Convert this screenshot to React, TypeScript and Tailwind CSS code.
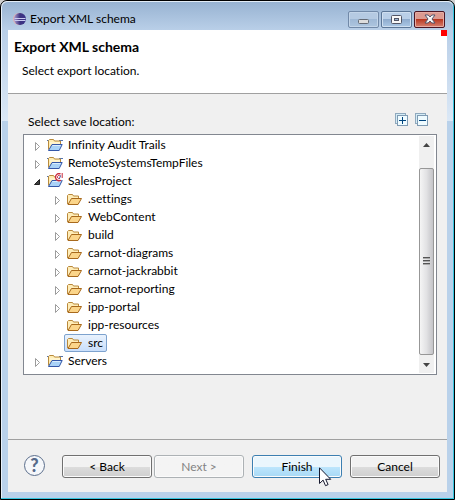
import React from "react";

type Kind = "project" | "web" | "folder";
interface Item {
  name: string;
  kind: Kind;
  state: "open" | "closed" | "none";
  selected?: boolean;
  children?: Item[];
}

const items: Item[] = [
  { name: "Infinity Audit Trails", kind: "project", state: "closed" },
  { name: "RemoteSystemsTempFiles", kind: "project", state: "closed" },
  {
    name: "SalesProject",
    kind: "web",
    state: "open",
    children: [
      { name: ".settings", kind: "folder", state: "closed" },
      { name: "WebContent", kind: "folder", state: "closed" },
      { name: "build", kind: "folder", state: "closed" },
      { name: "carnot-diagrams", kind: "folder", state: "closed" },
      { name: "carnot-jackrabbit", kind: "folder", state: "closed" },
      { name: "carnot-reporting", kind: "folder", state: "closed" },
      { name: "ipp-portal", kind: "folder", state: "closed" },
      { name: "ipp-resources", kind: "folder", state: "none" },
      { name: "src", kind: "folder", state: "none", selected: true },
    ],
  },
  { name: "Servers", kind: "project", state: "closed" },
];

function FolderIcon({ kind }: { kind: Kind }) {
  const project = kind !== "folder";
  return (
    <svg viewBox="0 0 16 16" className="h-4 w-4 shrink-0" aria-hidden="true">
      {project ? (
        <>
          <path d="M0 3.5h3M12 3.5h4" stroke="#5574ad" />
          <path d="M1.5 12.5V3.5l1-1h4l1 1.500h6V8" fill="#ffedb3" stroke="#b88a3c" />
          <path d="M3 6h10" stroke="#fffbe9" />
          <path d="M1.5 13.5 5 7.5H15.2L12.2 13.5Z" fill="#a9d2f7" stroke="#3457a8" />
          <path d="M5.500 8.500H13.500" stroke="#d9edff" />
        </>
      ) : (
        <>
          <path d="M.5 12.500V4.500l1-1h4l1 1.500h5V8" fill="#ffedb8" stroke="#b9883b" />
          <path d="M1 13.500 4.500 7.500H14.500L11 13.500Z" fill="#fbd58a" stroke="#a8691c" />
          <path d="M.5 5v8" stroke="#b9883b" />
        </>
      )}
      {kind === "web" && (
        <>
          <circle cx="12" cy="4" r="4" fill="#fff" />
          <path d="M13.500 .8A3.600 3.600 0 1 0 14 7.200" fill="none" stroke="#c92a3c" strokeWidth="1.300" />
          <path d="M13.500 3A1.700 1.700 0 1 0 13 5.500M15.200 0v5" fill="none" stroke="#c92a3c" />
          <path d="M12.500 5.500l1-3" stroke="#345aa5" />
        </>
      )}
    </svg>
  );
}

function Expander({ item }: { item: Item }) {
  if (item.state === "none") return <span className="w-3 shrink-0" />;
  return (
    <button
      type="button"
      aria-label={(item.state === "open" ? "Collapse " : "Expand ") + item.name}
      className="h-4 w-3 shrink-0"
    >
      <svg viewBox="0 0 12 16" className="h-4 w-3">
        {item.state === "open" ? (
          <path d="M7.500 6.500v5h-5Z" fill="#404040" stroke="#222" />
        ) : (
          <path d="M3.500 5.500v8l4-4Z" fill="#fff" stroke="#9c9c9c" />
        )}
      </svg>
    </button>
  );
}

function TreeRow({ item }: { item: Item }) {
  return (
    <li role="treeitem" aria-selected={!!item.selected} aria-expanded={item.state === "none" ? undefined : item.state === "open"}>
      <div className="flex h-[18px] items-center">
        <Expander item={item} />
        <span
          className={
            "flex h-[18px] items-center gap-[5px] rounded-[2px] border pr-[3px] pl-[2px] " +
            (item.selected
              ? "border-[#7da2ce] bg-gradient-to-b from-[#e9f2fd] to-[#c9dffb]"
              : "border-transparent")
          }
        >
          <FolderIcon kind={item.kind} />
          <span className="leading-4 whitespace-nowrap">{item.name}</span>
        </span>
      </div>
      {item.children && (
        <ul role="group" className="pl-5">
          {item.children.map((c) => (
            <TreeRow key={c.name} item={c} />
          ))}
        </ul>
      )}
    </li>
  );
}

function TreeTool({ label, plus }: { label: string; plus?: boolean }) {
  return (
    <button type="button" aria-label={label}>
      <svg viewBox="0 0 13 13" className="h-[13px] w-[13px]" shapeRendering="crispEdges">
        <rect x="0.5" y="0.5" width="10" height="10" fill="#d5ecf6" stroke="#8fa9be" />
        <rect x="2.5" y="2.5" width="10" height="10" fill="#effbff" stroke="#7f9bb3" />
        <path d="M4 7.5h7" stroke="#00457e" />
        {plus && <path d="M7.5 4v7" stroke="#00457e" />}
      </svg>
    </button>
  );
}

function Scrollbar() {
  return (
    <div className="flex w-[15px] shrink-0 flex-col bg-[#f0f0f0]" aria-hidden="true">
      <svg viewBox="0 0 15 32" className="h-8 w-[15px]">
        <path d="M4 11 7.5 7 11 11Z" fill="#444" />
      </svg>
      <div className="flex flex-1 items-center justify-center rounded-[2px] border border-[#979797] bg-gradient-to-r from-[#f5f5f5] via-[#e2e2e4] to-[#c4c4c8]">
        <svg viewBox="0 0 7 9" className="h-[9px] w-[7px]" shapeRendering="crispEdges">
          <path d="M0 .5h7M0 3.5h7M0 6.5h7" stroke="#555" />
          <path d="M0 1.5h7M0 4.5h7M0 7.5h7" stroke="#aaa" />
        </svg>
      </div>
      <svg viewBox="0 0 15 18" className="h-[18px] w-[15px]">
        <path d="M4 8 11 8 7.5 12Z" fill="#444" />
      </svg>
    </div>
  );
}

function EclipseIcon() {
  return (
    <svg viewBox="0 0 16 16" className="h-4 w-4" aria-hidden="true">
      <defs>
        <linearGradient id="orb" x1="0" x2="1">
          <stop offset="0" stopColor="#a99bd0" />
          <stop offset="0.5" stopColor="#3c3280" />
          <stop offset="1" stopColor="#3a3288" />
        </linearGradient>
      </defs>
      <circle cx="9" cy="8" r="6" fill="#e0b0b0" />
      <circle cx="10" cy="8" r="6" fill="url(#orb)" />
      <path d="M4.500 7.500h11M4.500 9.500h11" stroke="#c9cbf0" />
    </svg>
  );
}

const caption = "flex h-[17px] w-[31px] items-center justify-center rounded-[2px] border ";

function DialogButton({ children, tone = "normal" }: { children: React.ReactNode; tone?: "normal" | "off" | "hot" }) {
  const look =
    tone === "hot"
      ? "border-[#3c7fb1] from-[#eaf6fd] from-50% to-[#a7d9f5] via-[#bee6fd] via-50%"
      : tone === "off"
        ? "border-[#adb2b5] from-[#f4f4f4] to-[#f4f4f4] text-[#838383]"
        : "border-[#707070] from-[#f2f2f2] from-50% to-[#cfcfcf] via-[#dddddd] via-50%";
  return (
    <button
      type="button"
      disabled={tone === "off"}
      className={"h-[23px] min-w-0 flex-1 rounded-[3px] border bg-gradient-to-b leading-4 shadow-[inset_0_0_0_1px_#fbfbfb] " + look}
    >
      {children}
    </button>
  );
}

export default function App() {
  return (
    <div className="min-h-screen bg-[#d0d0d0] font-['Lato','Open_Sans',sans-serif] text-[12px] text-black [font-variant-ligatures:none]">
      <div className="flex min-h-screen flex-col rounded-t-[7px] border border-black bg-[linear-gradient(#b9cfe8_30px,#dbe8f6_120px,#b9d1ea_120px)] px-[7px] pb-[7px] shadow-[inset_-1px_-1px_0_#35c5df,inset_1px_1px_0_#e8f1fa]">
        <header className="-mx-[6px] flex h-[29px] items-center rounded-t-[6px] border-t border-[#e3edf7] bg-gradient-to-b from-[#98b3d2] to-[#b9cfe8] pt-[6px] pr-2 pl-2">
          <EclipseIcon />
          <h1 className="ml-1 flex-1 leading-4">Export XML schema</h1>
          <div className="flex gap-[2px]">
            <button type="button" aria-label="Minimize" className={caption + "border-[#7189a8] bg-gradient-to-b from-[#b5cae2] from-50% to-[#adc5df] via-[#9fb9d6] via-50% shadow-[inset_0_0_0_1px_#c3d5e9]"}>
              <svg viewBox="0 0 11 5" className="mt-1 h-[5px] w-[11px]"><rect x=".5" y=".5" width="10" height="4" rx="1" fill="#ddd" stroke="#646a75" /></svg>
            </button>
            <button type="button" aria-label="Maximize" className={caption + "border-[#5b7697] bg-gradient-to-b from-[#b9cfe8] from-50% to-[#abc8e6] via-[#8facce] via-50% shadow-[inset_0_0_0_1px_#cfdff0]"}>
              <svg viewBox="0 0 11 9" className="h-[9px] w-[11px]"><rect x=".5" y=".5" width="10" height="8" rx="1" fill="#f8f8f8" stroke="#535666" /><rect x="3.5" y="3.5" width="4" height="2" fill="#9ab5d4" stroke="#535666" /></svg>
            </button>
            <button type="button" aria-label="Close" className={caption + "border-[#4b1523] bg-gradient-to-b from-[#dc9a90] from-50% to-[#d68070] via-[#b93720] via-50% shadow-[inset_0_0_0_1px_#e6aca4]"}>
              <svg viewBox="0 0 12 10" className="h-[10px] w-3">
                <path d="M1 1h3.2L6 3 7.8 1H11L8 5l3 4H7.8L6 7 4.2 9H1L4 5Z" fill="#f7f7f7" stroke="#53546a" strokeLinejoin="round" />
              </svg>
            </button>
          </div>
        </header>

        <section className="flex h-[63px] justify-between bg-white pl-[6px]">
          <div>
            <h2 className="mt-2 text-[14px] leading-[18px] font-bold">Export XML schema</h2>
            <p className="mt-[7px] ml-2 leading-4">Select export location.</p>
          </div>
          <span className="h-[6px] w-[6px] bg-[#ff0000]" />
        </section>

        <main className="flex-1 border-t border-b border-[#a0a0a0] bg-[#f0f0f0] pt-[19px] pr-[10px] pl-[15px]">
          <div className="flex h-[21px] items-start pr-[9px] pl-[5px]">
            <span id="tree-label" className="flex-1 pt-[1px] leading-4">Select save location:</span>
            <div className="flex gap-[7px]">
              <TreeTool label="Expand all" plus />
              <TreeTool label="Collapse all" />
            </div>
          </div>
          <div className="flex border border-[#828790] bg-white py-px pr-[2px] pl-2">
            <ul role="tree" aria-labelledby="tree-label" className="flex-1 pb-[3px]">
              {items.map((i) => (
                <TreeRow key={i.name} item={i} />
              ))}
            </ul>
            <Scrollbar />
          </div>
        </main>

        <footer className="flex h-[52px] items-start bg-[#f0f0f0] px-[7px] pt-[15px] pl-4">
          <button type="button" aria-label="Help" className="mr-[17px] h-[21px] w-[21px] shrink-0 rounded-full border border-[#5b6e8c] bg-[#f5f7fa] text-[18px] leading-[19px] font-black text-[#566a8b]">
            ?
          </button>
          <div className="flex flex-1 gap-2">
            <div className="flex flex-[182] gap-[2px]">
              <DialogButton>&lt; Back</DialogButton>
              <DialogButton tone="off">Next &gt;</DialogButton>
            </div>
            <div className="relative flex flex-[90]">
              <DialogButton tone="hot">Finish</DialogButton>
              <svg viewBox="0 0 13 20" className="absolute top-3 left-[67px] h-5 w-[13px]" aria-hidden="true">
                <path d="M.5 .8v15.7l3.6-3.4 2.4 5.6 2.6-1.1-2.4-5.3h5Z" fill="#fff" stroke="#15182e" />
              </svg>
            </div>
            <div className="flex flex-[90]">
              <DialogButton>Cancel</DialogButton>
            </div>
          </div>
        </footer>
      </div>
    </div>
  );
}
